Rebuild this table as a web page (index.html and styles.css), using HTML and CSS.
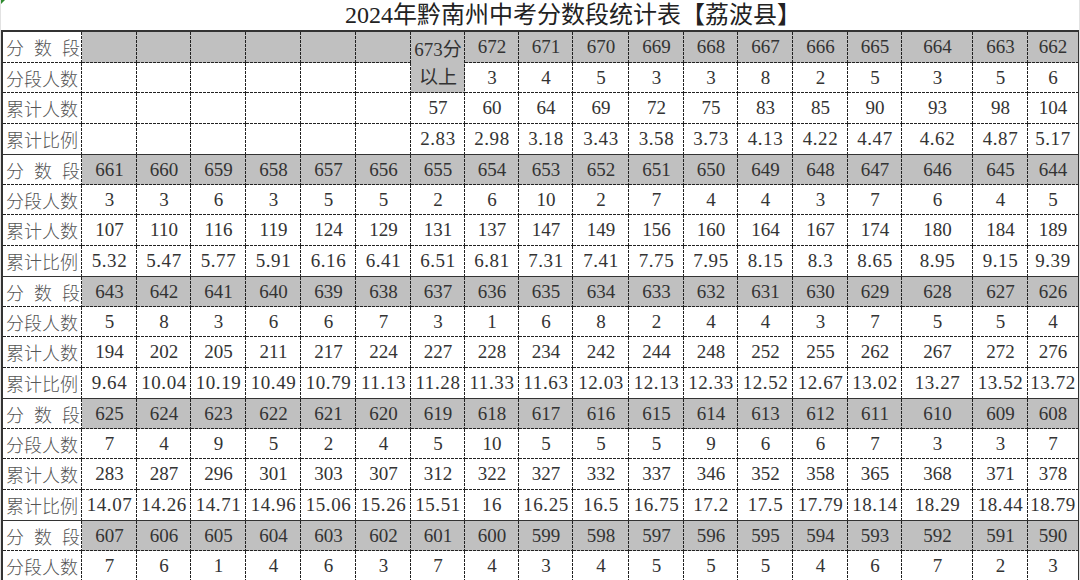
FILE: index.html
```html
<!DOCTYPE html>
<html lang="zh-CN">
<head>
<meta charset="utf-8">
<title>2024年黔南州中考分数段统计表【荔波县】</title>
<link rel="stylesheet" href="styles.css">
</head>
<body>
<div class="sheet">
  <div class="title">2024年黔南州中考分数段统计表【荔波县】</div>
  <table class="grid">
    <colgroup>
      <col class="c-label">
      <col style="width:55px"><col style="width:54px"><col style="width:55px"><col style="width:55px"><col style="width:55px"><col style="width:55px">
      <col style="width:54px"><col style="width:54px"><col style="width:54px"><col style="width:56px"><col style="width:55px"><col style="width:54px">
      <col style="width:55px"><col style="width:55px"><col style="width:54px"><col style="width:71px"><col style="width:55px"><col style="width:50px">
    </colgroup>
    <tbody>
      <tr class="seg first">
        <th class="lbl spread">分 数 段</th>
        <td></td><td></td><td></td><td></td><td></td><td></td>
        <td rowspan="2" class="top-cell">673分<br>以上</td>
        <td>672</td><td>671</td><td>670</td><td>669</td><td>668</td><td>667</td><td>666</td><td>665</td><td>664</td><td>663</td><td>662</td>
      </tr>
      <tr>
        <th class="lbl">分段人数</th>
        <td></td><td></td><td></td><td></td><td></td><td></td>
        <td>3</td><td>4</td><td>5</td><td>3</td><td>3</td><td>8</td><td>2</td><td>5</td><td>3</td><td>5</td><td>6</td>
      </tr>
      <tr>
        <th class="lbl">累计人数</th>
        <td></td><td></td><td></td><td></td><td></td><td></td>
        <td>57</td><td>60</td><td>64</td><td>69</td><td>72</td><td>75</td><td>83</td><td>85</td><td>90</td><td>93</td><td>98</td><td>104</td>
      </tr>
      <tr class="ratio">
        <th class="lbl">累计比例</th>
        <td></td><td></td><td></td><td></td><td></td><td></td>
        <td>2.83</td><td>2.98</td><td>3.18</td><td>3.43</td><td>3.58</td><td>3.73</td><td>4.13</td><td>4.22</td><td>4.47</td><td>4.62</td><td>4.87</td><td>5.17</td>
      </tr>

      <tr class="seg">
        <th class="lbl spread">分 数 段</th>
        <td>661</td><td>660</td><td>659</td><td>658</td><td>657</td><td>656</td><td>655</td><td>654</td><td>653</td><td>652</td><td>651</td><td>650</td><td>649</td><td>648</td><td>647</td><td>646</td><td>645</td><td>644</td>
      </tr>
      <tr>
        <th class="lbl">分段人数</th>
        <td>3</td><td>3</td><td>6</td><td>3</td><td>5</td><td>5</td><td>2</td><td>6</td><td>10</td><td>2</td><td>7</td><td>4</td><td>4</td><td>3</td><td>7</td><td>6</td><td>4</td><td>5</td>
      </tr>
      <tr>
        <th class="lbl">累计人数</th>
        <td>107</td><td>110</td><td>116</td><td>119</td><td>124</td><td>129</td><td>131</td><td>137</td><td>147</td><td>149</td><td>156</td><td>160</td><td>164</td><td>167</td><td>174</td><td>180</td><td>184</td><td>189</td>
      </tr>
      <tr class="ratio">
        <th class="lbl">累计比例</th>
        <td>5.32</td><td>5.47</td><td>5.77</td><td>5.91</td><td>6.16</td><td>6.41</td><td>6.51</td><td>6.81</td><td>7.31</td><td>7.41</td><td>7.75</td><td>7.95</td><td>8.15</td><td>8.3</td><td>8.65</td><td>8.95</td><td>9.15</td><td>9.39</td>
      </tr>

      <tr class="seg">
        <th class="lbl spread">分 数 段</th>
        <td>643</td><td>642</td><td>641</td><td>640</td><td>639</td><td>638</td><td>637</td><td>636</td><td>635</td><td>634</td><td>633</td><td>632</td><td>631</td><td>630</td><td>629</td><td>628</td><td>627</td><td>626</td>
      </tr>
      <tr>
        <th class="lbl">分段人数</th>
        <td>5</td><td>8</td><td>3</td><td>6</td><td>6</td><td>7</td><td>3</td><td>1</td><td>6</td><td>8</td><td>2</td><td>4</td><td>4</td><td>3</td><td>7</td><td>5</td><td>5</td><td>4</td>
      </tr>
      <tr>
        <th class="lbl">累计人数</th>
        <td>194</td><td>202</td><td>205</td><td>211</td><td>217</td><td>224</td><td>227</td><td>228</td><td>234</td><td>242</td><td>244</td><td>248</td><td>252</td><td>255</td><td>262</td><td>267</td><td>272</td><td>276</td>
      </tr>
      <tr class="ratio">
        <th class="lbl">累计比例</th>
        <td>9.64</td><td>10.04</td><td>10.19</td><td>10.49</td><td>10.79</td><td>11.13</td><td>11.28</td><td>11.33</td><td>11.63</td><td>12.03</td><td>12.13</td><td>12.33</td><td>12.52</td><td>12.67</td><td>13.02</td><td>13.27</td><td>13.52</td><td>13.72</td>
      </tr>

      <tr class="seg">
        <th class="lbl spread">分 数 段</th>
        <td>625</td><td>624</td><td>623</td><td>622</td><td>621</td><td>620</td><td>619</td><td>618</td><td>617</td><td>616</td><td>615</td><td>614</td><td>613</td><td>612</td><td>611</td><td>610</td><td>609</td><td>608</td>
      </tr>
      <tr>
        <th class="lbl">分段人数</th>
        <td>7</td><td>4</td><td>9</td><td>5</td><td>2</td><td>4</td><td>5</td><td>10</td><td>5</td><td>5</td><td>5</td><td>9</td><td>6</td><td>6</td><td>7</td><td>3</td><td>3</td><td>7</td>
      </tr>
      <tr>
        <th class="lbl">累计人数</th>
        <td>283</td><td>287</td><td>296</td><td>301</td><td>303</td><td>307</td><td>312</td><td>322</td><td>327</td><td>332</td><td>337</td><td>346</td><td>352</td><td>358</td><td>365</td><td>368</td><td>371</td><td>378</td>
      </tr>
      <tr class="ratio">
        <th class="lbl">累计比例</th>
        <td>14.07</td><td>14.26</td><td>14.71</td><td>14.96</td><td>15.06</td><td>15.26</td><td>15.51</td><td>16</td><td>16.25</td><td>16.5</td><td>16.75</td><td>17.2</td><td>17.5</td><td>17.79</td><td>18.14</td><td>18.29</td><td>18.44</td><td>18.79</td>
      </tr>

      <tr class="seg">
        <th class="lbl spread">分 数 段</th>
        <td>607</td><td>606</td><td>605</td><td>604</td><td>603</td><td>602</td><td>601</td><td>600</td><td>599</td><td>598</td><td>597</td><td>596</td><td>595</td><td>594</td><td>593</td><td>592</td><td>591</td><td>590</td>
      </tr>
      <tr>
        <th class="lbl">分段人数</th>
        <td>7</td><td>6</td><td>1</td><td>4</td><td>6</td><td>3</td><td>7</td><td>4</td><td>3</td><td>4</td><td>5</td><td>5</td><td>5</td><td>4</td><td>6</td><td>7</td><td>2</td><td>3</td>
      </tr>
    </tbody>
  </table>
</div>
</body>
</html>
```

FILE: styles.css
```css
html, body {
  margin: 0;
  padding: 0;
  background: #ffffff;
  overflow: hidden;
}

.sheet {
  position: relative;
  width: 1080px;
  height: 580px;
  box-sizing: border-box;
  border-left: 1px solid #e2e2e2;
  border-right: 1px solid #e2e2e2;
  overflow: hidden;
}

.sheet::before {
  content: "";
  position: absolute;
  left: 0;
  top: 0;
  width: 0;
  height: 0;
  border-top: 4px solid #2e8b2e;
  border-right: 4px solid transparent;
}

.title {
  height: 30px;
  line-height: 31px;
  padding-left: 66px;
  text-align: center;
  font-family: "Liberation Serif", "Noto Sans CJK SC", serif;
  font-size: 24px;
  color: #222;
  white-space: nowrap;
}

.grid {
  border-collapse: separate;
  border-spacing: 0;
  table-layout: fixed;
  width: 1077px;
  border: 2px solid #333;
  font-family: "Liberation Serif", "Noto Sans CJK SC", serif;
  font-size: 19px;
  color: #333;
}

.c-label {
  width: 79px;
}

.grid tr {
  height: 30.5px;
}

.grid th,
.grid td {
  border: 0;
  padding: 0;
  text-align: center;
  vertical-align: middle;
  font-weight: normal;
  white-space: nowrap;
  overflow: hidden;
  background-image:
    linear-gradient(to bottom, #222 0 3px, transparent 3px 4px),
    linear-gradient(to right, #222 0 3px, transparent 3px 4px);
  background-size: 1px 4px, 4px 1px;
  background-position: right top, left bottom;
  background-repeat: repeat-y, repeat-x;
}

.grid td:last-child {
  background-image: linear-gradient(to right, #222 0 3px, transparent 3px 4px);
  background-size: 4px 1px;
  background-position: left bottom;
  background-repeat: repeat-x;
}

.grid tr.ratio th,
.grid tr.ratio td {
  background-image: linear-gradient(to bottom, #222 0 3px, transparent 3px 4px);
  background-size: 1px 4px;
  background-position: right top;
  background-repeat: repeat-y;
}

.grid tr.ratio td:last-child {
  background-image: none;
}

.grid .lbl {
  font-family: "Noto Sans CJK SC", sans-serif;
  font-weight: 300;
  font-size: 18px;
  color: #555;
  text-align: left;
  padding: 0 2px 0 3px;
  line-height: 28px;
}

.grid .spread {
  text-align: justify;
  text-align-last: justify;
}

.grid tr.seg th,
.grid tr.seg td {
  border-top: 1px solid #333;
}

.grid tr.seg.first th,
.grid tr.seg.first td {
  border-top: 0;
}

.grid tr.seg td {
  background-color: #c0c0c0;
}

.grid .top-cell {
  line-height: 28px;
  padding-top: 2px;
}

.grid tr.ratio td {
  letter-spacing: 0.6px;
}
```
